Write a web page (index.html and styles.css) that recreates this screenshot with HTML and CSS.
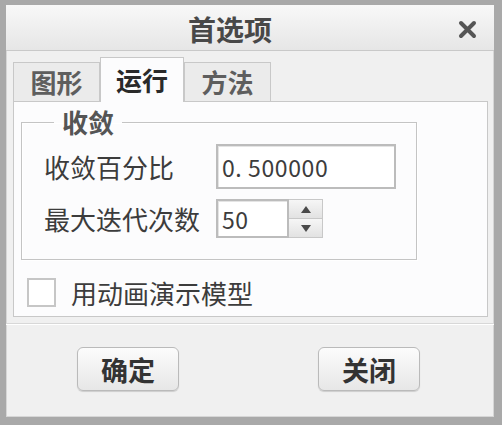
FILE: index.html
```html
<!DOCTYPE html>
<html lang="zh-CN">
<head>
  <meta charset="UTF-8" />
  <title>首选项</title>
  <link rel="stylesheet" href="styles.css">
</head>
<body>
  <div class="window">
    <div class="titlebar">
      <span class="title">首选项</span>
      <svg class="close" width="19" height="19" viewBox="0 0 19 19">
        <path d="M3 3 L16 16 M16 3 L3 16" stroke="#555" stroke-width="4" stroke-linecap="round"/>
      </svg>
    </div>

    <div class="content">
      <div class="tabs">
        <div class="tab">图形</div>
        <div class="tab active">运行</div>
        <div class="tab">方法</div>
      </div>

      <div class="panel">
        <fieldset class="group">
          <legend>收敛</legend>
          <div class="form">
            <label>收敛百分比</label>
            <div class="field wide">0. 500000</div>

            <label>最大迭代次数</label>
            <div class="spin">
              <div class="field narrow">50</div>
              <div class="spin-btns">
                <span class="up"></span>
                <span class="down"></span>
              </div>
            </div>
          </div>
        </fieldset>

        <div class="check-row">
          <span class="checkbox"></span>
          <span class="check-label">用动画演示模型</span>
        </div>
      </div>
    </div>

    <div class="footer">
      <button class="btn">确定</button>
      <button class="btn">关闭</button>
    </div>
  </div>
</body>
</html>
```

FILE: styles.css
```css
body {
  margin: 0;
  font-family: "Noto Sans CJK SC", sans-serif;
  background: #a9a9a9;
}

.window {
  box-sizing: border-box;
  width: 502px;
  height: 425px;
  border-style: solid;
  border-color: #a9a9a9;
  border-width: 5px 8px 8px 6px;
  background: #f0f0f0;
  box-shadow: inset 0 0 0 1px #d6d6d6;
  display: flex;
  flex-direction: column;
}

.titlebar {
  box-sizing: border-box;
  height: 46px;
  padding-top: 3px;
  border-bottom: 1px solid #c9c9c9;
  background: linear-gradient(#f8f8f8, #e6e6e6);
  display: flex;
  align-items: center;
}

.title {
  margin-left: 182px;
  font-size: 28px;
  font-weight: bold;
  line-height: 1;
  color: #484848;
}

.close {
  margin-left: auto;
  margin-right: 17px;
}

.content {
  padding: 6px 6px 0 7px;
}

.tabs {
  display: flex;
  align-items: flex-end;
  height: 44px;
}

.tab {
  box-sizing: border-box;
  width: 87px;
  height: 39px;
  border: 1px solid #c8c8c8;
  border-bottom: none;
  background: #ebebeb;
  font-size: 26px;
  font-weight: bold;
  line-height: 1;
  color: #5e5e5e;
  display: flex;
  align-items: center;
  justify-content: center;
}

.tab.active {
  width: 84px;
  height: 45px;
  margin-bottom: -1px;
  background: #fcfcfd;
  color: #2a2a2a;
  position: relative;
  z-index: 1;
}

.panel {
  box-sizing: border-box;
  width: 475px;
  height: 216px;
  border: 1px solid #c8c8c8;
  background: #fcfcfd;
  padding: 6px 0 0 7px;
}

.group {
  box-sizing: border-box;
  width: 396px;
  min-width: 0;
  margin: 0;
  padding: 8px 0 21px 22px;
  border: 1px solid #c4c4c4;
  box-shadow: 1px 1px 0 #fff, inset 1px 1px 0 #fff;
}

.group legend {
  margin-left: 10px;
  padding: 0 8px;
  font-size: 26px;
  font-weight: bold;
  line-height: 28px;
  color: #555;
}

.form {
  display: grid;
  grid-template-columns: 172px auto;
  row-gap: 10px;
  align-items: center;
}

.form label {
  font-size: 26px;
  line-height: 1;
  color: #3c3c3c;
}

.field {
  box-sizing: border-box;
  border: 2px solid #bcbcbc;
  background: #fff;
  box-shadow: inset 1px 1px 0 #e4e4e4;
  padding-left: 4px;
  font-size: 23px;
  letter-spacing: 0.6px;
  color: #3c3c3c;
  display: flex;
  align-items: center;
}

.field.wide {
  width: 180px;
  height: 45px;
}

.spin {
  display: flex;
}

.field.narrow {
  width: 73px;
  height: 39px;
}

.spin-btns {
  box-sizing: border-box;
  width: 34px;
  height: 39px;
  border: 1px solid #c8c8c8;
  border-left: none;
  display: flex;
  flex-direction: column;
}

.spin-btns span {
  flex: 1;
  display: flex;
  align-items: center;
  justify-content: center;
  background: linear-gradient(#f6f6f6, #e2e2e2);
}

.spin-btns .up {
  border-bottom: 1px solid #c8c8c8;
}

.spin-btns .up::after {
  content: "";
  border-left: 5px solid transparent;
  border-right: 5px solid transparent;
  border-bottom: 7px solid #4a4a4a;
}

.spin-btns .down::after {
  content: "";
  border-left: 5px solid transparent;
  border-right: 5px solid transparent;
  border-top: 7px solid #4a4a4a;
}

.check-row {
  display: flex;
  align-items: center;
  gap: 15px;
  margin-top: 18px;
  padding-left: 6px;
}

.checkbox {
  box-sizing: border-box;
  width: 29px;
  height: 29px;
  border: 2px solid #c6c6c6;
  background: #fff;
}

.check-label {
  font-size: 26px;
  line-height: 1;
  color: #3c3c3c;
}

.footer {
  margin-top: 6px;
  border-top: 1px solid #d8d8d8;
  box-shadow: inset 0 1px 0 #fff;
  padding: 23px 0 0 71px;
  display: flex;
  gap: 139px;
}

.btn {
  box-sizing: border-box;
  width: 102px;
  height: 44px;
  border: 1px solid #bababa;
  border-radius: 6px;
  background: linear-gradient(#fcfcfc, #e7e7e7);
  box-shadow: 0 1px 1px rgba(0, 0, 0, 0.15);
  font-family: "Noto Sans CJK SC", sans-serif;
  font-size: 27px;
  font-weight: bold;
  line-height: 1;
  color: #333;
  padding: 0;
}
```
